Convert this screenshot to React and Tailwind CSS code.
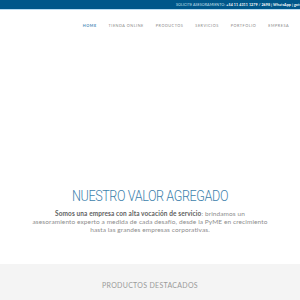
const navItems = ["HOME", "TIENDA ONLINE", "PRODUCTOS", "SERVICIOS", "PORTFOLIO", "EMPRESA"];

export default function App() {
  return (
    <div className="h-[300px] w-[300px] overflow-hidden bg-white font-['Lato',sans-serif]">
      {/* top info bar */}
      <div className="h-[9px] bg-[#00578a] flex items-center pl-[176px] whitespace-nowrap overflow-hidden">
        <span className="text-[3.6px] leading-none text-[#cfe3f0] tracking-[0.1px]">
          SOLICITE ASESORAMIENTO:{" "}
          <span className="font-bold text-white">+54 11 4311 1279 / 2698 | WhatsApp | gotsmail</span>
        </span>
      </div>
      <div className="h-[1px] bg-[#b9dcf2]" />

      {/* nav */}
      <nav className="h-[31px] flex items-center justify-end pr-[11px] gap-[12px]">
        {navItems.map((item, i) => (
          <span
            key={item}
            className={`text-[3.8px] tracking-[0.5px] leading-none ${i === 0 ? "text-[#4a8bb8] font-bold" : "text-[#8a8a8a]"}`}
          >
            {item}
          </span>
        ))}
      </nav>

      {/* hero spacer */}
      <div className="h-[150px]" />

      {/* valor agregado */}
      <section className="flex flex-col items-center text-center">
        <h2 className="text-[12.6px] leading-none font-light text-[#3d7fac] tracking-[-0.4px] font-['Roboto',sans-serif] scale-y-[1.12]">
          NUESTRO VALOR AGREGADO
        </h2>
        <p className="mt-[6px] w-[300px] text-[6.5px] leading-[8px] text-[#8d8d8d] tracking-[0.1px]">
          <span className="font-bold text-[#5f5f5f]">Somos una empresa con alta vocación de servicio</span>: brindamos un
          <br />
          asesoramiento experto a medida de cada desafío, desde la PyME en crecimiento
          <br />
          hasta las grandes empresas corporativas.
        </p>
      </section>

      {/* productos destacados */}
      <section className="mt-[30px] h-[40px] bg-[#f4f4f4] flex justify-center pt-[18px]">
        <h3 className="text-[7px] leading-none text-[#9a9a9a] tracking-[0.3px]">PRODUCTOS DESTACADOS</h3>
      </section>
    </div>
  );
}
